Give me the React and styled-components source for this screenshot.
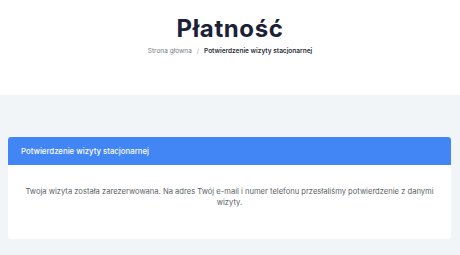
import React from 'react'
import styled, { createGlobalStyle } from 'styled-components'

const GlobalStyle = createGlobalStyle`
  html, body {
    margin: 0;
    padding: 0;
    background: #f2f5f7;
    font-family: Inter, "Noto Sans", sans-serif;
  }
`

const Page = styled.div`
  width: 460px;
  min-height: 255px;
  display: flex;
  flex-direction: column;
`

const Hero = styled.div`
  background: #ffffff;
  height: 95px;
  display: flex;
  flex-direction: column;
  align-items: center;
  padding-top: 15px;
  box-sizing: border-box;
`

const Title = styled.h1`
  margin: 0;
  font-size: 24px;
  line-height: 28px;
  font-weight: 700;
  color: #1b2237;
  letter-spacing: 0.6px;
`

const Crumbs = styled.div`
  display: flex;
  align-items: center;
  gap: 5px;
  margin-top: 3px;
  font-size: 6.5px;
  line-height: 10px;
`

const Crumb = styled.span`
  color: ${p => (p.active ? '#2a2f3a' : '#777c85')};
  font-weight: ${p => (p.active ? 600 : 400)};
`

const Sep = styled.span`
  color: #9aa0a8;
  font-size: 6px;
`

const Content = styled.div`
  padding: 42px 9px 17px 8px;
`

const Card = styled.div`
  background: #ffffff;
  border-radius: 3px;
  overflow: hidden;
`

const CardHead = styled.div`
  background: #4285f4;
  height: 28px;
  display: flex;
  align-items: center;
  padding-left: 13px;
  color: #ffffff;
  font-size: 7.8px;
  font-weight: 500;
`

const CardBody = styled.div`
  padding: 21px 16px 31px;
  text-align: center;
  color: #5b5f66;
  font-size: 7.6px;
  line-height: 11px;
`

export default function App() {
  return (
    <>
      <GlobalStyle />
      <Page>
        <Hero>
          <Title>Płatność</Title>
          <Crumbs>
            <Crumb>Strona główna</Crumb>
            <Sep>/</Sep>
            <Crumb active>Potwierdzenie wizyty stacjonarnej</Crumb>
          </Crumbs>
        </Hero>
        <Content>
          <Card>
            <CardHead>Potwierdzenie wizyty stacjonarnej</CardHead>
            <CardBody>
              Twoja wizyta została zarezerwowana. Na adres Twój e-mail i numer telefonu przesłaliśmy potwierdzenie z danymi wizyty.
            </CardBody>
          </Card>
        </Content>
      </Page>
    </>
  )
}
